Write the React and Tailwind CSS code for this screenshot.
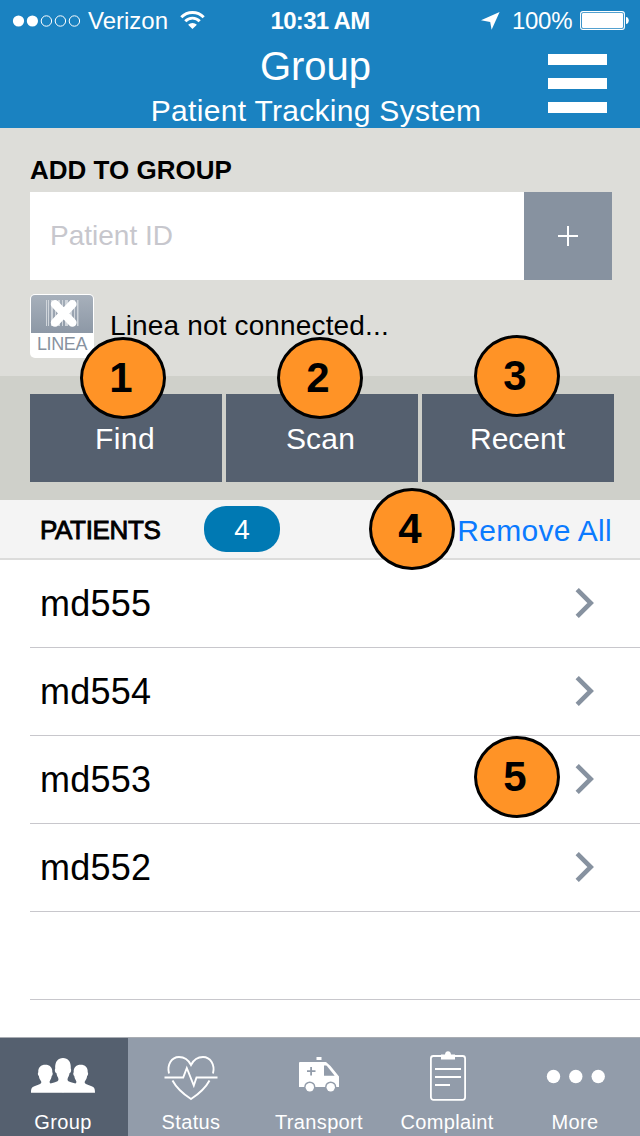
import React from "react";

const patients = ["md555", "md554", "md553", "md552"];

function Callout({ n, place }) {
  return (
    <div
      className={`absolute z-10 flex h-[82px] w-[86px] items-center justify-center rounded-[50%] border-[3px] border-black bg-[#ff9326] pr-[4px] text-[42px] leading-[42px] font-bold text-black ${place}`}
    >
      {n}
    </div>
  );
}

function StatusBar() {
  return (
    <div className="grid h-[41px] grid-cols-[1fr_100px_1fr] items-center text-[24px] leading-[41px]">
      <div className="flex items-center pl-[12px]">
        <svg className="h-[14px] w-[70px]" viewBox="0 0 70 14" fill="none" stroke="#fff">
          <circle cx="6.5" cy="7" r="5.6" fill="#fff" stroke="none" />
          <circle cx="20.4" cy="7" r="5.6" fill="#fff" stroke="none" />
          <circle cx="34.4" cy="7" r="5.2" />
          <circle cx="48.4" cy="7" r="5.2" />
          <circle cx="62.4" cy="7" r="5.2" />
        </svg>
        <span className="ml-[6px] w-[80px] whitespace-nowrap">Verizon</span>
        <svg className="mb-px ml-[12px] h-[18px] w-[25px]" viewBox="0 0 25 18" fill="none" stroke="#fff" strokeWidth="2.9">
          <path d="M1.3 6.3a15.5 15.5 0 0 1 22.4 0" />
          <path d="M5.3 10.3a9.8 9.8 0 0 1 14.4 0" />
          <path d="M12.5 18 8.1 13.8a6.2 6.2 0 0 1 8.8 0z" fill="#fff" stroke="none" />
        </svg>
      </div>
      <span className="text-center font-bold tracking-[-0.7px] whitespace-nowrap">10:31 AM</span>
      <div className="flex items-center justify-end pr-[11px]">
        <svg className="h-[18px] w-[19px]" viewBox="0 0 19 18" fill="#fff">
          <path d="M18.6 0 10.6 17.8 9.2 10 0 8.2z" />
        </svg>
        <span className="ml-[12px] w-[61px] tracking-[-0.3px] whitespace-nowrap">100%</span>
        <svg className="ml-[7px] h-[19px] w-[49px]" viewBox="0 0 49 19" fill="none">
          <rect x="0.6" y="0.6" width="43.8" height="17.8" rx="2.4" stroke="#fff" strokeWidth="1.1" />
          <rect x="2" y="2" width="41" height="15" rx="1.2" fill="#fff" />
          <path d="M46 6c1.6.2 2.8 1.6 2.8 3.5S47.6 12.8 46 13z" fill="#fff" />
        </svg>
      </div>
    </div>
  );
}

function Header() {
  return (
    <header className="h-[128px] bg-[#1a82c1] text-white">
      <StatusBar />
      <div className="grid grid-cols-[84px_1fr_92px]">
        <div />
        <div className="text-center whitespace-nowrap">
          <h1 className="h-[47px] pr-[1px] text-[40px] leading-[50px]">Group</h1>
          <h2 className="h-[40px] text-[30px] leading-[45px] tracking-[0.3px]">Patient Tracking System</h2>
        </div>
        <div className="flex flex-col gap-[13px] pt-[13px]">
          <div className="h-[11px] w-[59px] bg-white" />
          <div className="h-[11px] w-[59px] bg-white" />
          <div className="h-[11px] w-[59px] bg-white" />
        </div>
      </div>
    </header>
  );
}

function LineaIcon() {
  return (
    <div className="h-[64px] w-[64px] overflow-hidden rounded-[5px] bg-white p-px">
      <div className="flex h-[38px] justify-center rounded-t-[4px] bg-linear-to-b from-[#a7b0bb] to-[#8d98a6] pt-[4px]">
        <svg className="h-[30px] w-[34px]" viewBox="0 0 34 30">
          <g fill="#d0d5db">
            <rect x="1" y="1" width="1" height="26" />
            <rect x="3" y="1" width="1" height="26" />
            <rect x="6" y="1" width="2" height="26" />
            <rect x="10" y="1" width="1" height="26" />
            <rect x="13" y="1" width="2" height="26" />
            <rect x="17" y="1" width="1" height="26" />
            <rect x="20" y="1" width="3" height="26" />
            <rect x="25" y="1" width="2" height="26" />
            <rect x="29" y="1" width="1" height="26" />
            <rect x="32" y="1" width="1.5" height="26" />
          </g>
          <path d="M10 5.2 27.4 23.6M27.4 5.2 10 23.6" stroke="#fff" strokeWidth="8.4" strokeLinecap="round" />
        </svg>
      </div>
      <div className="text-center text-[18px] leading-[23px] tracking-[-0.4px] text-[#8792a0]">LINEA</div>
    </div>
  );
}

const halfGroup =
  "M0 34.7c0-4 .5-5.5 4-6.7l4.5-1.8c2.2-.9 2.4-2 .8-4.2-1-1.5-1.2-2.5-1.4-4-1.2-.8-1.3-3-.6-3.7-.3-5 2.6-7.6 7-7.6s7.3 2.6 7 7.6c.7.7.6 2.9-.6 3.7-.2 1.5-.5 2.5-1.4 4-1 1.7-1 2.6.2 3.6l4.5-1.4c3.5-1 4-2.2 3-4.7-.9-1.5-1.2-2.500-1.5-4.200-1.7-.8-2-3.3-1.3-4.8C23.8 3.5 27 0 32 0h.2v34.7z";

function GroupIcon() {
  return (
    <svg className="mr-[2px] h-[50px] w-[64px]" viewBox="0 0 64 50" fill="#fff">
      <path d={halfGroup} />
      <path d={halfGroup} transform="translate(64 0) scale(-1 1)" />
    </svg>
  );
}

function StatusIcon() {
  return (
    <svg className="mr-[2px] h-[50px] w-[54px]" viewBox="0 0 54 50" fill="none" stroke="#fff" strokeWidth="1.9">
      <path d="M5 17.5C2.8 9 7.5 1 15 1c5.5 0 9.5 3 12 8 2.5-5 6.5-8 12-8 7.5 0 12.2 8 10 16.5" />
      <path d="M8.5 24.5C12.5 32 20 38.5 27 43c7-4.5 14.5-11 18.5-18.5" />
      <path d="M.5 21.5h18.7L22.8 12l7 17.5 2.7-8h21" />
    </svg>
  );
}

function TransportIcon() {
  return (
    <svg className="mr-[2px] h-[50px] w-[42px]" viewBox="0 0 42 50" fill="#fff">
      <rect x="18.5" y="1" width="5" height="3" />
      <path d="M2 6h26l4.500 4L41 20.500V31h-2.700a5.600 5.600 0 0 0-11.200 0H17.400a5.600 5.600 0 0 0-11.200 0H1V7a1 1 0 0 1 1-1z" />
      <path d="M26 9.5v10.3h10.7L29.3 10.5l-1-1z" fill="#929caa" />
      <path d="M9 14.2h3.2V11h1.8v3.2h3.5v1.800H14v3.5h-1.800V16H9z" fill="#929caa" />
      <circle cx="11.8" cy="31.3" r="4.2" />
      <circle cx="32.7" cy="31.3" r="4.2" />
    </svg>
  );
}

function ComplaintIcon() {
  return (
    <svg className="h-[50px] w-[38px]" viewBox="0 0 38 50" fill="none" stroke="#fff" strokeWidth="1.8">
      <rect x="1.9" y="5" width="34.2" height="43.8" rx="2.5" />
      <path d="M12 8.5V3.5h4c.3-2 1.3-3.2 3-3.2s2.7 1.2 3 3.2h4v5z" fill="#fff" stroke="none" />
      <path d="M6 18h26M6 26h26M6 34h15" strokeWidth="2" />
    </svg>
  );
}

function MoreIcon() {
  return (
    <svg className="h-[50px] w-[60px]" viewBox="0 0 60 50" fill="#fff">
      <circle cx="7.5" cy="25.5" r="6.7" />
      <circle cx="29.8" cy="25.5" r="6.7" />
      <circle cx="52.2" cy="25.5" r="6.7" />
    </svg>
  );
}

function Tab({ label, icon, selected, pad }) {
  return (
    <div className={`flex flex-col items-center ${pad} ${selected ? "bg-[#55606f]" : ""}`}>
      {icon}
      <span className="mt-auto pr-[2px] text-[20px] leading-[28px] tracking-[0.35px]">{label}</span>
    </div>
  );
}

export default function App() {
  return (
    <div className="relative flex h-[1136px] w-[640px] flex-col overflow-hidden bg-white font-['Liberation_Sans',Arial,sans-serif] text-black">
      <Header />

      <section className="h-[248px] bg-[#ddddd9] pt-[27px] pl-[30px]">
        <h3 className="h-[37px] text-[26px] leading-[30px] font-bold">ADD TO GROUP</h3>
        <div className="flex h-[88px] w-[582px]">
          <div className="flex-1 bg-white pl-[20px] text-[28px] leading-[87px] text-[#c7c7cd]">Patient ID</div>
          <div className="flex w-[88px] items-center justify-center bg-[#8792a0]">
            <svg className="h-[20px] w-[20px]" viewBox="0 0 20 20" stroke="#fff" strokeWidth="2">
              <path d="M10 0v20M0 10h20" />
            </svg>
          </div>
        </div>
        <div className="mt-[14px] flex">
          <LineaIcon />
          <p className="ml-[16px] text-[28px] leading-[63px] tracking-[0.15px]">Linea not connected...</p>
        </div>
      </section>

      <section className="flex h-[124px] gap-[4px] bg-[#cfd0ca] py-[18px] pl-[30px] text-[30px] leading-[89px] text-white">
        <div className="w-[192px] shrink-0 bg-[#55606f] pr-[2px] text-center tracking-[0.4px]">Find</div>
        <div className="w-[192px] shrink-0 bg-[#55606f] pr-[3px] text-center tracking-[0.2px]">Scan</div>
        <div className="w-[192px] shrink-0 bg-[#55606f] pr-[1px] text-center">Recent</div>
      </section>

      <section className="flex h-[60px] items-center border-b-2 border-[#dcdcdb] bg-[#f4f4f4] pr-[28px] pl-[40px]">
        <h3 className="w-[164px] pt-[2px] text-[26px] leading-[30px] tracking-[-0.35px] [-webkit-text-stroke:0.9px_black]">PATIENTS</h3>
        <div className="h-[46px] w-[76px] rounded-[22px] bg-[#0079b3] text-center text-[28px] leading-[47px] text-white">4</div>
        <span className="ml-auto pt-[3px] text-[30px] leading-[34px] tracking-[0.3px] text-[#0a7aff]">Remove All</span>
      </section>

      <ul className="pl-[30px]">
        {patients.map((id) => (
          <li key={id} className="flex h-[88px] items-center justify-between border-b border-[#c8c7cc] pr-[45px] pl-[10px]">
            <span className="text-[36px] leading-[40px] tracking-[0.25px]">{id}</span>
            <svg className="mb-px h-[30px] w-[20px]" viewBox="0 0 20 30" fill="none" stroke="#8792a0" strokeWidth="4.6">
              <path d="M2.2 1.6 15.7 15 2.2 28.4" />
            </svg>
          </li>
        ))}
        <li className="h-[88px] border-b border-[#c8c7cc]" />
      </ul>

      <nav className="mt-auto grid h-[99px] grid-cols-5 border-t border-[#a9adb3] bg-[#929caa] text-white">
        <Tab label="Group" icon={<GroupIcon />} selected pad="pt-[20px]" />
        <Tab label="Status" icon={<StatusIcon />} pad="pt-[18px]" />
        <Tab label="Transport" icon={<TransportIcon />} pad="pt-[18px]" />
        <Tab label="Complaint" icon={<ComplaintIcon />} pad="pt-[13px]" />
        <Tab label="More" icon={<MoreIcon />} pad="pt-[13px]" />
      </nav>

      <Callout n="1" place="left-[80px] top-[337px]" />
      <Callout n="2" place="left-[277px] top-[337px]" />
      <Callout n="3" place="left-[474px] top-[335px]" />
      <Callout n="4" place="left-[369px] top-[488px]" />
      <Callout n="5" place="left-[474px] top-[736px]" />
    </div>
  );
}
